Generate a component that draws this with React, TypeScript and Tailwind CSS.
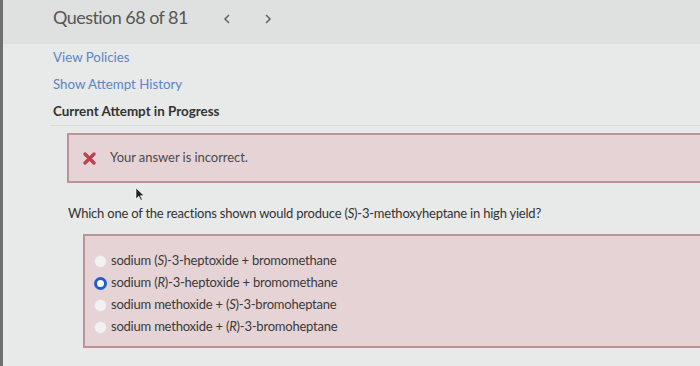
import React from "react";

const Radio = ({ selected }: { selected?: boolean }) =>
  selected ? (
    <span className="inline-block w-[13px] h-[13px] rounded-full border-[3px] border-[#1d5fcf] bg-white shrink-0" />
  ) : (
    <span className="inline-block w-[13px] h-[13px] rounded-full bg-[#f3f1f1] border border-[#e2dcdd] shrink-0" />
  );

const options: { pre: string; conf: string; post: string; selected?: boolean }[] = [
  { pre: "sodium (", conf: "S", post: ")-3-heptoxide + bromomethane" },
  { pre: "sodium (", conf: "R", post: ")-3-heptoxide + bromomethane", selected: true },
  { pre: "sodium methoxide + (", conf: "S", post: ")-3-bromoheptane" },
  { pre: "sodium methoxide + (", conf: "R", post: ")-3-bromoheptane" },
];

export default function App() {
  return (
    <div className="relative w-[700px] h-[366px] overflow-hidden bg-[#e8e9e9] border-l-[3px] border-[#6f6f6f] font-['Lato','Liberation_Sans',sans-serif]">
      <div className="h-[44px] bg-[#dfe1e0] flex items-start pt-[5px] pl-[50px]">
        <span className="text-[18px] leading-[24px] tracking-[-0.55px] text-[#565656]">Question 68 of 81</span>
        <svg className="ml-[35px] mt-[9px]" width="8" height="10" viewBox="0 0 8 10">
          <path d="M6 1 L2 5 L6 9" fill="none" stroke="#666" strokeWidth="1.6" />
        </svg>
        <svg className="ml-[33px] mt-[9px]" width="8" height="10" viewBox="0 0 8 10">
          <path d="M2 1 L6 5 L2 9" fill="none" stroke="#666" strokeWidth="1.6" />
        </svg>
      </div>
      <div className="ml-[47px] border-b border-[#d9dada] pl-[3px]">
        <div className="text-[13.3px] leading-[27px] text-[#5a86c4]">View Policies</div>
        <div className="text-[13.3px] leading-[27px] text-[#5a86c4]">Show Attempt History</div>
        <div className="text-[13.4px] leading-[27px] text-[#333] font-bold">Current Attempt in Progress</div>
      </div>
      <div className="ml-[64px] mt-[7px] h-[50px] bg-[#e6d3d6] border-2 border-r-0 border-[#bd939a] flex items-center pl-[14px]">
        <svg width="13" height="13" viewBox="0 0 13 13" className="shrink-0">
          <path d="M2 2 L11 11 M11 2 L2 11" stroke="#c23d4f" strokeWidth="3.2" strokeLinecap="round" />
        </svg>
        <span className="ml-[14px] text-[13px] tracking-[-0.05px] text-[#4a4a4a]">Your answer is incorrect.</span>
      </div>
      <div className="ml-[65px] mt-[20px] text-[13px] leading-[20px] tracking-[-0.22px] text-[#333]">
        Which one of the reactions shown would produce (<i>S</i>)-3-methoxyheptane in high yield?
      </div>
      <div className="ml-[80px] mt-[11px] h-[114px] bg-[#e6d3d6] border-2 border-r-0 border-[#bd939a] pt-[14px] pl-[9px]">
        {options.map((o, i) => (
          <div key={i} className="flex items-center h-[22px]">
            <Radio selected={o.selected} />
            <span className="ml-[4px] text-[13px] tracking-[-0.22px] text-[#3a3a3a]">
              {o.pre}
              <i>{o.conf}</i>
              {o.post}
            </span>
          </div>
        ))}
      </div>
      <svg className="absolute left-[132px] top-[187px]" width="10" height="14" viewBox="0 0 10 14">
        <path d="M1 1 L1 12 L3.8 9.3 L5.8 13.3 L7.3 12.6 L5.3 8.7 L9 8.7 Z" fill="#222" stroke="#fff" strokeWidth="0.6" />
      </svg>
    </div>
  );
}
